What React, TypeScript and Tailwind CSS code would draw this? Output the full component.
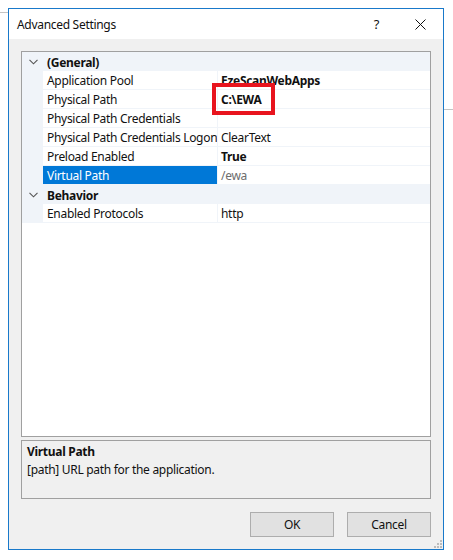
import React from 'react'

type Row =
  | { kind: 'cat'; label: string }
  | { kind: 'prop'; label: string; value?: string; bold?: boolean; muted?: boolean; selected?: boolean }

const rows: Row[] = [
  { kind: 'cat', label: '(General)' },
  { kind: 'prop', label: 'Application Pool', value: 'EzeScanWebApps', bold: true },
  { kind: 'prop', label: 'Physical Path', value: 'C:\\EWA', bold: true },
  { kind: 'prop', label: 'Physical Path Credentials' },
  { kind: 'prop', label: 'Physical Path Credentials Logon', value: 'ClearText' },
  { kind: 'prop', label: 'Preload Enabled', value: 'True', bold: true },
  { kind: 'prop', label: 'Virtual Path', value: '/ewa', muted: true, selected: true },
  { kind: 'cat', label: 'Behavior' },
  { kind: 'prop', label: 'Enabled Protocols', value: 'http' },
]

function Chevron() {
  return (
    <svg width="9" height="6" viewBox="0 0 9 6" className="block">
      <polyline points="0.5,0.8 4.5,4.8 8.5,0.8" fill="none" stroke="#555" strokeWidth="1.1" />
    </svg>
  )
}

function GridRow({ row }: { row: Row }) {
  if (row.kind === 'cat') {
    return (
      <div className="flex h-[19px] bg-[#f0f4f9]">
        <div className="flex w-[21px] items-center justify-center pl-[1px]">
          <Chevron />
        </div>
        <div className="flex items-center whitespace-nowrap pl-[4px] pt-[2px] font-bold leading-none">{row.label}</div>
      </div>
    )
  }
  return (
    <div className="flex h-[19px]">
      <div className="w-[21px] bg-[#f0f4f9]" />
      <div
        className={
          'flex w-[174px] items-center overflow-hidden whitespace-nowrap border-b border-[#f0f4f9] pl-[4px] pt-[2px] leading-none ' +
          (row.selected ? 'bg-[#0078d7] text-white' : 'bg-white')
        }
      >
        {row.label}
      </div>
      <div className="w-[1px] bg-[#f0f4f9]" />
      <div
        className={
          'flex flex-1 items-center whitespace-nowrap border-b border-[#f0f4f9] bg-white pl-[3px] pt-[2px] leading-none ' +
          (row.bold ? 'font-bold ' : '') +
          (row.muted ? 'text-[#6d6d6d]' : '')
        }
      >
        {row.value}
      </div>
    </div>
  )
}

export default function App() {
  return (
    <div
      className="relative h-[560px] w-[453px] overflow-hidden bg-white text-[12px] tracking-[-0.3px] text-[#111]"
      style={{ fontFamily: '"Noto Sans", "Open Sans", sans-serif' }}
    >
      {/* lines of the page behind the dialog */}
      <div className="absolute left-0 top-[12px] h-[1px] w-[8px] bg-[#c4c4c4]" />
      <div className="absolute right-0 top-[109px] h-[1px] w-[9px] bg-[#c4c4c4]" />

      <div className="ml-[8px] mt-[8px] flex h-[542px] w-[436px] flex-col border border-[#1979ca]">
        {/* title bar */}
        <div className="flex h-[30px] items-center bg-white pl-[8px] pt-[1px]">
          <span className="text-[12px]">Advanced Settings</span>
          <span className="ml-auto mr-[36px] text-[13px]">?</span>
          <svg width="11" height="11" viewBox="0 0 11 11" className="mr-[17px]">
            <path d="M0.5 0.5 L10.5 10.5 M10.5 0.5 L0.5 10.5" stroke="#111" strokeWidth="1" />
          </svg>
        </div>

        <div className="relative flex flex-1 flex-col bg-[#f0f0f0] px-[12px] pt-[12px]">
          {/* property grid */}
          <div className="h-[386px] border border-[#a0a0a0] bg-white">
            {rows.map((r, i) => (
              <GridRow key={i} row={r} />
            ))}
          </div>

          {/* description */}
          <div className="mt-[3px] h-[59px] border border-[#a0a0a0] bg-[#f0f0f0] px-[5px] pt-[2px] leading-[18px]">
            <div className="font-bold">Virtual Path</div>
            <div>[path] URL path for the application.</div>
          </div>

          {/* buttons */}
          <div className="mt-[13px] flex justify-end gap-[13px]">
            <button className="flex h-[25px] w-[84px] items-center justify-center border border-[#adadad] bg-[#e1e1e1] text-[12px]">
              OK
            </button>
            <button className="flex h-[25px] w-[84px] items-center justify-center border border-[#adadad] bg-[#e1e1e1] text-[12px]">
              Cancel
            </button>
          </div>

          {/* size grip */}
          <svg width="9" height="9" viewBox="0 0 9 9" className="absolute bottom-[1px] right-[1px]">
            <rect x="7" y="1" width="2" height="2" fill="#bcbcbc" />
            <rect x="4" y="4" width="2" height="2" fill="#bcbcbc" />
            <rect x="7" y="4" width="2" height="2" fill="#bcbcbc" />
            <rect x="1" y="7" width="2" height="2" fill="#bcbcbc" />
            <rect x="4" y="7" width="2" height="2" fill="#bcbcbc" />
            <rect x="7" y="7" width="2" height="2" fill="#bcbcbc" />
          </svg>

          {/* red highlight around the physical path value */}
          <div className="absolute left-[203px] top-[44px] h-[32px] w-[63px] border-[4px] border-[#e8141e]" />
        </div>
      </div>
    </div>
  )
}
